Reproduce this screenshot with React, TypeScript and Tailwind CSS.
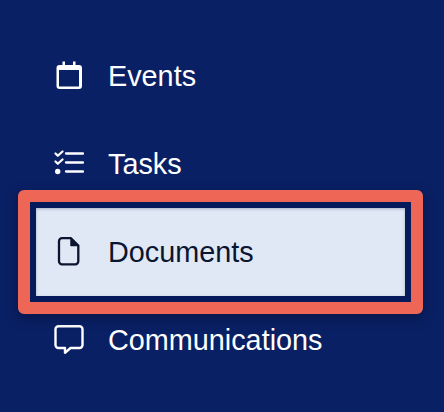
import type { ReactNode } from 'react';

function CalendarIcon() {
  return (
    <svg width="30" height="30" viewBox="0 0 30 30" fill="currentColor">
      <path
        fillRule="evenodd"
        d="M8.500 0.500h2.500v3.500h8V0.500h2.500v3.500h3.500a3 3 0 0 1 3 3v18a3 3 0 0 1-3 3H5.500a3 3 0 0 1-3-3V7a3 3 0 0 1 3-3h3ZM5 9v16.500h20V9Z"
      />
    </svg>
  );
}

function TasksIcon() {
  return (
    <svg width="30" height="30" viewBox="0 0 30 30" fill="none" stroke="currentColor" strokeLinecap="round" strokeLinejoin="round">
      <path d="M1.500 4.500l2.300 2.300L8.500 2.500M1.500 12.500l2.300 2.300L8.500 10.500" strokeWidth="2.200" />
      <circle cx="3.700" cy="22.500" r="2.700" fill="currentColor" stroke="none" />
      <path d="M12 4.500h17M12 13.500h17M12 22.500h17" strokeWidth="2.300" />
    </svg>
  );
}

function DocumentIcon() {
  return (
    <svg width="30" height="30" viewBox="0 0 30 30" fill="none" stroke="currentColor" strokeWidth="2.300" strokeLinecap="round" strokeLinejoin="round">
      <path d="M8 1.200h9L24.300 8.500v15.800a3 3 0 0 1-3 3H8a3 3 0 0 1-3-3V4.200a3 3 0 0 1 3-3Z" />
      <path d="M17 1.500v7h7" fill="currentColor" strokeWidth="1.500" />
    </svg>
  );
}

function ChatIcon() {
  return (
    <svg width="30" height="30" viewBox="0 0 30 30" fill="none" stroke="currentColor" strokeWidth="2.400" strokeLinecap="round" strokeLinejoin="round">
      <path d="M4.500 1.200h21a3 3 0 0 1 3 3v15.800a3 3 0 0 1-3 3H16.500l-5.500 4.800v-4.800H4.500a3 3 0 0 1-3-3V4.200a3 3 0 0 1 3-3Z" />
    </svg>
  );
}

function NavItem({ icon, label }: { icon: ReactNode; label: string }) {
  return (
    <div className="flex h-[88px] items-center">
      <span className="flex w-[72px] justify-center pr-[7px]">{icon}</span>
      <span className="text-[28.8px] leading-none">{label}</span>
    </div>
  );
}

export default function App() {
  return (
    <div className="h-[412px] w-[444px] overflow-hidden bg-[#0a2064] pt-[32px] pl-[36px] font-['Liberation_Sans',Arial,sans-serif]">
      <ul className="w-[369px] text-white">
        <li>
          <NavItem icon={<CalendarIcon />} label="Events" />
        </li>
        <li>
          <NavItem icon={<TasksIcon />} label="Tasks" />
        </li>
        <li className="relative z-10 -m-[18px] rounded-[6px] border-[12px] border-[#ee6756] shadow-[0_4px_12px_rgba(3,12,50,0.5)]">
          <div className="rounded-[3px] border-[6px] border-[#071a5c]">
            <div className="bg-[#e0e8f6] text-[#0b1530] shadow-[inset_0_1px_3px_rgba(5,15,60,0.25)]">
              <NavItem icon={<DocumentIcon />} label="Documents" />
            </div>
          </div>
        </li>
        <li>
          <NavItem icon={<ChatIcon />} label="Communications" />
        </li>
      </ul>
    </div>
  );
}
